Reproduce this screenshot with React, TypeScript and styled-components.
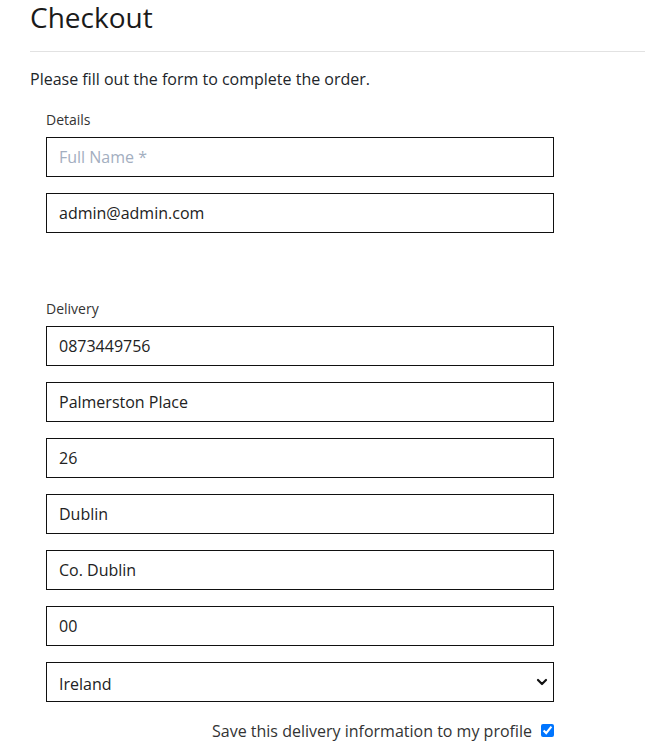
import React from "react"
import styled, { createGlobalStyle } from "styled-components"

const GlobalStyle = createGlobalStyle`
  body {
    margin: 0;
    background: #fff;
    color: #212529;
    font-family: "Open Sans", "Noto Sans", sans-serif;
  }
`

const Page = styled.div`
  padding-left: 30px;
`

const Title = styled.h1`
  margin: 0;
  font-size: 28px;
  line-height: 34px;
  font-weight: 400;
  color: #1a1a1a;
`

const Divider = styled.hr`
  margin: 17px 0 16px;
  border: 0;
  border-top: 1px solid #e2e2e2;
`

const Intro = styled.p`
  margin: 0;
  font-size: 16px;
  line-height: 22.5px;
`

const Form = styled.form`
  width: 508px;
  margin-left: 16px;
  display: flex;
  flex-direction: column;
`

const Section = styled.fieldset<{ $top: number }>`
  border: 0;
  margin: ${(p) => p.$top}px 0 0;
  padding: 0;
  display: flex;
  flex-direction: column;
  gap: 16px;
`

const Label = styled.legend`
  padding: 0;
  margin-bottom: 8px;
  font-size: 14px;
  line-height: 19px;
  color: #333;
`

const Input = styled.input`
  box-sizing: border-box;
  width: 100%;
  height: 40px;
  margin: 0;
  padding: 0 12px;
  border: 1px solid #111;
  border-radius: 0;
  font-family: inherit;
  font-size: 16px;
  color: #222;
  background: #fff;
  &::placeholder {
    color: #a3aec0;
  }
`

const SelectWrap = styled.div`
  position: relative;
`

const Select = styled.select`
  box-sizing: border-box;
  width: 100%;
  height: 40px;
  margin: 0;
  padding: 5px 12px 0;
  border: 1px solid #111;
  border-radius: 0;
  appearance: none;
  font-family: inherit;
  font-size: 16px;
  color: #222;
  background: #fff;
`

const Chevron = styled.svg`
  position: absolute;
  right: 6px;
  top: 15px;
  pointer-events: none;
`

const SaveRow = styled.label`
  display: flex;
  justify-content: flex-end;
  align-items: center;
  gap: 9px;
  margin-top: 18px;
  font-size: 16px;
  line-height: 22.5px;
  color: #333;
`

const Check = styled.input`
  width: 13px;
  height: 13px;
  margin: 0;
`

const deliveryFields = [
  "0873449756",
  "Palmerston Place",
  "26",
  "Dublin",
  "Co. Dublin",
  "00",
]

export default function App() {
  return (
    <Page>
      <GlobalStyle />
      <Title>Checkout</Title>
      <Divider />
      <Intro>Please fill out the form to complete the order.</Intro>
      <Form onSubmit={(e) => e.preventDefault()}>
        <Section $top={19}>
          <Label>Details</Label>
          <Input placeholder="Full Name *" />
          <Input defaultValue="admin@admin.com" />
        </Section>
        <Section $top={66}>
          <Label>Delivery</Label>
          {deliveryFields.map((v, i) => (
            <Input key={i} defaultValue={v} />
          ))}
          <SelectWrap>
            <Select defaultValue="IE">
              <option value="IE">Ireland</option>
            </Select>
            <Chevron width="12" height="10" viewBox="0 0 12 10">
              <path
                d="M2 3 L6 7 L10 3"
                fill="none"
                stroke="#111"
                strokeWidth="2.2"
                strokeLinecap="round"
                strokeLinejoin="round"
              />
            </Chevron>
          </SelectWrap>
        </Section>
        <SaveRow>
          Save this delivery information to my profile
          <Check type="checkbox" defaultChecked />
        </SaveRow>
      </Form>
    </Page>
  )
}
